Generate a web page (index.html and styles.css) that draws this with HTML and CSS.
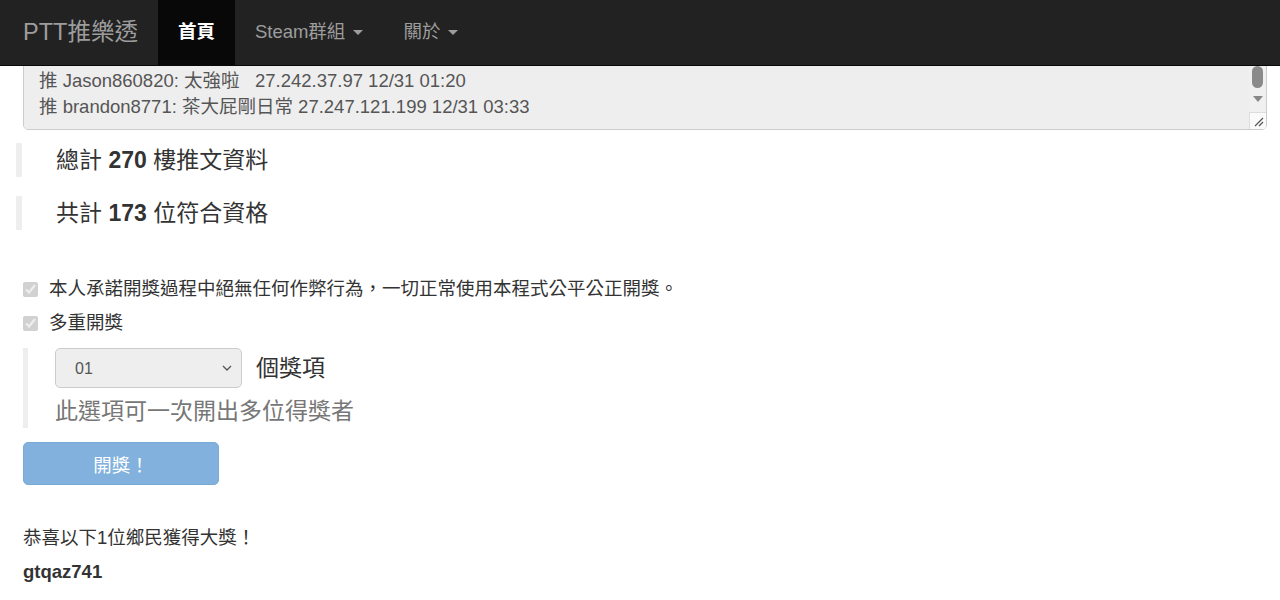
FILE: index.html
```html
<!DOCTYPE html>
<html lang="zh-Hant">
<head>
    <meta charset="UTF-8">
    <meta name="viewport" content="width=device-width, initial-scale=1.0">
    <title>PTT推樂透</title>
    <link rel="stylesheet" href="styles.css">
</head>
<body>
    <nav class="navbar">
        <a class="brand" href="#">PTT推樂透</a>
        <ul class="nav">
            <li class="active"><a href="#">首頁</a></li>
            <li><a href="#">Steam群組 <span class="caret"></span></a></li>
            <li><a href="#">關於 <span class="caret"></span></a></li>
        </ul>
    </nav>

    <div class="container">
        <div class="comments-wrap">
            <textarea id="comments" class="comments" rows="4" readonly>推 abc123: 推推 1.160.12.5 12/30 22:10
推 mmchen: 參加 114.36.8.77 12/30 22:41
推 leo0321: 給我中 36.230.1.14 12/30 23:02
推 kevin_w: 感謝大大 223.136.4.20 12/31 00:05
推 s9527: 我要中 1.171.22.46 12/31 00:48
推 chiyo: 推一個 42.72.15.3 12/31 01:02
推 Jason860820: 太強啦   27.242.37.97 12/31 01:20
推 brandon8771: 茶大屁剛日常 27.247.121.199 12/31 03:33</textarea>
            <!-- scrollbar drawing, the real one is hidden in the capture -->
            <div class="scrollbar">
                <div class="scroll-track">
                    <span class="scroll-thumb"></span>
                    <span class="scroll-down"></span>
                </div>
                <div class="scroll-corner">
                    <svg width="10" height="10" viewBox="0 0 10 10"><path d="M9 1L1 9M9 5L5 9" stroke="#555" stroke-width="1.2"/></svg>
                </div>
            </div>
        </div>

        <blockquote class="stat">總計 <b>270</b> 樓推文資料</blockquote>
        <blockquote class="stat">共計 <b>173</b> 位符合資格</blockquote>

        <div class="options">
            <label class="checkbox">
                <input type="checkbox" checked disabled>
                本人承諾開獎過程中絕無任何作弊行為，一切正常使用本程式公平公正開獎。
            </label>
            <label class="checkbox">
                <input type="checkbox" checked disabled>
                多重開獎
            </label>
        </div>

        <div class="multi">
            <div class="multi-row">
                <select class="prize-count" disabled>
                    <option>01</option>
                </select>
                <span class="multi-label">個獎項</span>
            </div>
            <p class="hint">此選項可一次開出多位得獎者</p>
        </div>

        <button class="btn-draw" disabled>開獎！</button>

        <div class="result">
            <p>恭喜以下1位鄉民獲得大獎！</p>
            <p class="winner">gtqaz741</p>
        </div>
    </div>

    <script src="script.js"></script>
</body>
</html>
```

FILE: styles.css
```css
* {
    box-sizing: border-box;
}
body {
    margin: 0;
    font-family: "Liberation Sans", "Noto Sans CJK TC", sans-serif;
    font-size: 18.5px;
    line-height: 1.43;
    color: #333;
    background-color: #fff;
}
a {
    text-decoration: none;
}
.navbar {
    position: fixed;
    top: 0;
    left: 0;
    right: 0;
    z-index: 10;
    height: 66px;
    display: flex;
    align-items: stretch;
    padding: 0 23px;
    background-color: #222;
    border-bottom: 1px solid #080808;
}
.brand {
    display: flex;
    align-items: center;
    font-size: 23.5px;
    color: #9d9d9d;
    margin-right: 20px;
}
.nav {
    display: flex;
    margin: 0;
    padding: 0;
    list-style: none;
}
.nav li a {
    display: flex;
    align-items: center;
    height: 100%;
    padding: 0 20px;
    color: #9d9d9d;
}
.nav li.active a {
    background-color: #080808;
    color: #fff;
    font-weight: bold;
}
.caret {
    display: inline-block;
    width: 0;
    height: 0;
    margin-left: 8px;
    border-top: 5px solid;
    border-left: 5px solid transparent;
    border-right: 5px solid transparent;
}
.container {
    padding: 0 13px 0 23px;
    margin-top: 14px;
}
.comments-wrap {
    position: relative;
}
.comments {
    display: block;
    width: 100%;
    height: 116px;
    padding: 4px 32px 9px 15px;
    font-family: inherit;
    font-size: 18.5px;
    line-height: 26px;
    color: #555;
    background-color: #eee;
    border: 1px solid #ccc;
    border-radius: 5px;
    resize: none;
}
.scrollbar {
    position: absolute;
    top: 1px;
    right: 1px;
    bottom: 1px;
    width: 17px;
    display: flex;
    flex-direction: column;
    background-color: #f0f0f0;
    border-radius: 0 4px 4px 0;
}
.scroll-track {
    flex: 1;
    display: flex;
    flex-direction: column;
    align-items: center;
    justify-content: flex-end;
    padding-bottom: 10px;
}
.scroll-thumb {
    width: 11px;
    height: 22px;
    border-radius: 6px;
    background-color: #8a8a8a;
}
.scroll-down {
    width: 0;
    height: 0;
    margin-top: 8px;
    border-top: 6px solid #888;
    border-left: 5px solid transparent;
    border-right: 5px solid transparent;
}
.scroll-corner {
    height: 17px;
    display: flex;
    align-items: flex-end;
    justify-content: flex-end;
    padding: 0 2px 2px 0;
    background-color: #fafafa;
    border-top: 1px solid #ddd;
    border-left: 1px solid #ddd;
    border-bottom-right-radius: 4px;
}
.stat {
    margin: 13px 0 0 -7px;
    padding: 5px 0 5px 34px;
    font-size: 23px;
    line-height: 24px;
    border-left: 6px solid #eee;
}
.stat + .stat {
    margin-top: 19px;
}
.options {
    margin-top: 47px;
}
.checkbox {
    display: flex;
    align-items: center;
    gap: 11px;
    height: 25px;
    margin-bottom: 9px;
}
.checkbox input {
    width: 15px;
    height: 15px;
    margin: 0;
}
.multi {
    margin-top: 12px;
    padding: 0 0 0 27px;
    border-left: 5px solid #eee;
}
.multi-row {
    display: flex;
    align-items: center;
    gap: 14px;
}
.prize-count {
    width: 187px;
    height: 40px;
    padding: 0 19px;
    font-family: inherit;
    font-size: 16px;
    color: #555;
    background-color: #eee;
    border: 1px solid #ccc;
    border-radius: 5px;
    opacity: 1;
    appearance: none;
    background-repeat: no-repeat;
    background-position: right 9px center;
    background-image: url("data:image/svg+xml,%3Csvg xmlns='http://www.w3.org/2000/svg' width='10' height='6'%3E%3Cpath d='M1 1l4 4 4-4' fill='none' stroke='%23555' stroke-width='1.3'/%3E%3C/svg%3E");
}
.multi-label {
    font-size: 23px;
}
.hint {
    margin: 7px 0 0;
    padding-bottom: 1px;
    font-size: 23px;
    line-height: 32px;
    color: #777;
}
.btn-draw {
    display: block;
    width: 196px;
    height: 43px;
    margin-top: 14px;
    font-family: inherit;
    font-size: 18.5px;
    color: #fff;
    background-color: #81b1dc;
    border: 1px solid #7aabd6;
    border-radius: 5px;
}
.result {
    margin-top: 40px;
}
.result p {
    margin: 0 0 8px;
}
.winner {
    font-weight: bold;
}
```

FILE: script.js
```js
// keep the comment list scrolled to the newest line
var comments = document.getElementById('comments');
comments.scrollTop = comments.scrollHeight;
```
